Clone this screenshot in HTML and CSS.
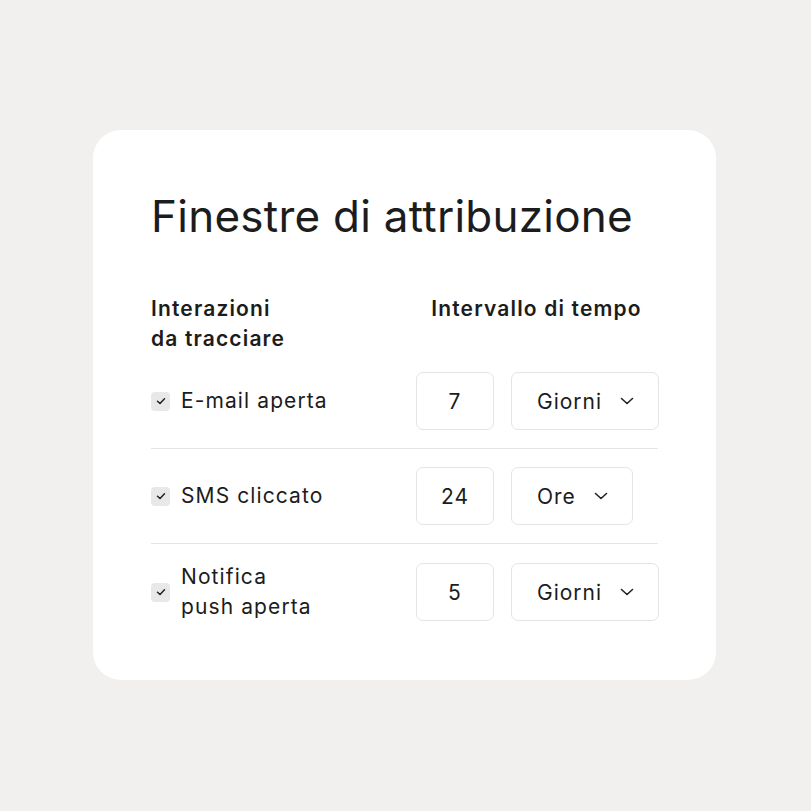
FILE: index.html
```html
<!DOCTYPE html>
<html lang="it">
<head>
    <meta charset="UTF-8">
    <title>Finestre di attribuzione</title>
    <link rel="stylesheet" href="styles.css">
</head>
<body>
<div class="page">
    <div class="card">
        <h1 class="title">Finestre di attribuzione</h1>

        <div class="head">
            <div class="head-label">Interazioni<br>da tracciare</div>
            <div class="head-range">Intervallo di tempo</div>
        </div>

        <!-- una riga per ogni interazione -->
        <div class="row">
            <label class="check">
                <span class="box"><svg width="10" height="8" viewBox="0 0 10 8"><path d="M1.5 4.2 L4 6.5 L8.5 1.8" fill="none" stroke="#222" stroke-width="1.5" stroke-linecap="round" stroke-linejoin="round"/></svg></span>
                <span class="name">E-mail aperta</span>
            </label>
            <div class="num">7</div>
            <div class="select">Giorni <svg class="chev" width="14" height="8" viewBox="0 0 14 8"><path d="M1.5 1.5 L7 6.5 L12.5 1.5" fill="none" stroke="#222" stroke-width="1.6" stroke-linecap="round" stroke-linejoin="round"/></svg></div>
        </div>

        <div class="row">
            <label class="check">
                <span class="box"><svg width="10" height="8" viewBox="0 0 10 8"><path d="M1.5 4.2 L4 6.5 L8.5 1.8" fill="none" stroke="#222" stroke-width="1.5" stroke-linecap="round" stroke-linejoin="round"/></svg></span>
                <span class="name">SMS cliccato</span>
            </label>
            <div class="num">24</div>
            <div class="select">Ore <svg class="chev" width="14" height="8" viewBox="0 0 14 8"><path d="M1.5 1.5 L7 6.5 L12.5 1.5" fill="none" stroke="#222" stroke-width="1.6" stroke-linecap="round" stroke-linejoin="round"/></svg></div>
        </div>

        <div class="row last">
            <label class="check">
                <span class="box"><svg width="10" height="8" viewBox="0 0 10 8"><path d="M1.5 4.2 L4 6.5 L8.5 1.8" fill="none" stroke="#222" stroke-width="1.5" stroke-linecap="round" stroke-linejoin="round"/></svg></span>
                <span class="name">Notifica<br>push aperta</span>
            </label>
            <div class="num">5</div>
            <div class="select">Giorni <svg class="chev" width="14" height="8" viewBox="0 0 14 8"><path d="M1.5 1.5 L7 6.5 L12.5 1.5" fill="none" stroke="#222" stroke-width="1.6" stroke-linecap="round" stroke-linejoin="round"/></svg></div>
        </div>
    </div>
</div>
</body>
</html>
```

FILE: styles.css
```css
body{
    margin: 0;
    background: #f1f0ee;
    font-family: Inter, "Liberation Sans", sans-serif;
    color: #1c1c1c;
}
.page{
    width: 811px;
    height: 811px;
    padding: 130px 0 0 93px;
    box-sizing: border-box;
}
.card{
    width: 623px;
    height: 550px;
    box-sizing: border-box;
    background: #fff;
    border-radius: 28px;
    padding: 58px 58px 0 58px;
}
.card .title{
    margin: 0;
    font-size: 44px;
    font-weight: 400;
    letter-spacing: 0.25px;
    line-height: 56px;
}
.card .head{
    display: flex;
    margin-top: 50px;
    font-size: 21px;
    font-weight: 600;
    line-height: 30px;
    letter-spacing: 1.15px;
}
.card .head-label{
    width: 265px;
}
.card .head-range{
    width: 241px;
    text-align: center;
}
.card .row{
    display: flex;
    align-items: center;
    padding: 18px 0;
    border-bottom: 1.5px solid #e4e4e4;
}
.card .row.last{
    border-bottom: none;
}
.card .check{
    width: 265px;
    flex-shrink: 0;
    display: flex;
    align-items: center;
    gap: 11px;
    font-size: 21px;
    line-height: 30px;
    letter-spacing: 1.1px;
}
.card .box{
    width: 19px;
    height: 19px;
    border-radius: 4px;
    background: #e8e8e8;
    display: flex;
    align-items: center;
    justify-content: center;
}
.card .num,
.card .select{
    flex-shrink: 0;
    height: 58px;
    box-sizing: border-box;
    border: 1.5px solid #e4e4e4;
    border-radius: 7px;
    display: flex;
    align-items: center;
    font-size: 21px;
    letter-spacing: 1px;
}
.card .num{
    width: 78px;
    justify-content: center;
}
.card .select{
    margin-left: 17px;
    padding: 0 24px 0 25px;
}
.card .chev{
    margin-left: 18px;
}
```
